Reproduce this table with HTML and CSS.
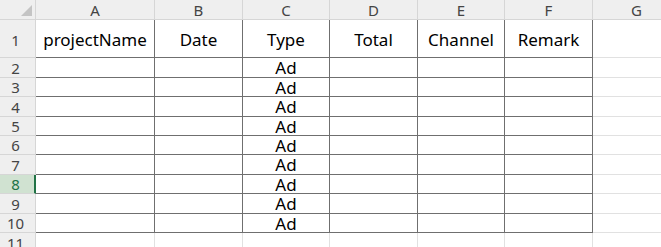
FILE: index.html
```html
<!DOCTYPE html>
<html lang="en">
<head>
<meta charset="utf-8">
<title>Sheet1</title>
<link rel="stylesheet" href="styles.css">
</head>
<body>
<div class="sheet">
  <div class="corner"><span class="corner-mark"></span></div>
  <div class="colhead">A</div>
  <div class="colhead">B</div>
  <div class="colhead">C</div>
  <div class="colhead">D</div>
  <div class="colhead">E</div>
  <div class="colhead">F</div>
  <div class="colhead">G</div>

  <div class="rowhead r1">1</div>
  <div class="cell r1 tb">projectName</div>
  <div class="cell r1 tb">Date</div>
  <div class="cell r1 tb">Type</div>
  <div class="cell r1 tb">Total</div>
  <div class="cell r1 tb">Channel</div>
  <div class="cell r1 tb">Remark</div>
  <div class="cell r1"></div>

  <div class="rowhead">2</div>
  <div class="cell tb"></div><div class="cell tb"></div><div class="cell tb">Ad</div><div class="cell tb"></div><div class="cell tb"></div><div class="cell tb"></div><div class="cell"></div>
  <div class="rowhead">3</div>
  <div class="cell tb"></div><div class="cell tb"></div><div class="cell tb">Ad</div><div class="cell tb"></div><div class="cell tb"></div><div class="cell tb"></div><div class="cell"></div>
  <div class="rowhead">4</div>
  <div class="cell tb"></div><div class="cell tb"></div><div class="cell tb">Ad</div><div class="cell tb"></div><div class="cell tb"></div><div class="cell tb"></div><div class="cell"></div>
  <div class="rowhead">5</div>
  <div class="cell tb"></div><div class="cell tb"></div><div class="cell tb">Ad</div><div class="cell tb"></div><div class="cell tb"></div><div class="cell tb"></div><div class="cell"></div>
  <div class="rowhead">6</div>
  <div class="cell tb"></div><div class="cell tb"></div><div class="cell tb">Ad</div><div class="cell tb"></div><div class="cell tb"></div><div class="cell tb"></div><div class="cell"></div>
  <div class="rowhead">7</div>
  <div class="cell tb"></div><div class="cell tb"></div><div class="cell tb">Ad</div><div class="cell tb"></div><div class="cell tb"></div><div class="cell tb"></div><div class="cell"></div>
  <div class="rowhead active">8</div>
  <div class="cell tb"></div><div class="cell tb"></div><div class="cell tb">Ad</div><div class="cell tb"></div><div class="cell tb"></div><div class="cell tb"></div><div class="cell"></div>
  <div class="rowhead">9</div>
  <div class="cell tb"></div><div class="cell tb"></div><div class="cell tb">Ad</div><div class="cell tb"></div><div class="cell tb"></div><div class="cell tb"></div><div class="cell"></div>
  <div class="rowhead">10</div>
  <div class="cell tb"></div><div class="cell tb"></div><div class="cell tb">Ad</div><div class="cell tb"></div><div class="cell tb"></div><div class="cell tb"></div><div class="cell"></div>
  <div class="rowhead">11</div>
  <div class="cell"></div><div class="cell"></div><div class="cell"></div><div class="cell"></div><div class="cell"></div><div class="cell"></div><div class="cell"></div>
</div>
</body>
</html>
```

FILE: styles.css
```css
html, body {
  margin: 0;
  padding: 0;
  background: #ffffff;
  overflow: hidden;
}

.sheet {
  display: grid;
  grid-template-columns: 36px 119px 88px 87px 88px 87px 88px 88px;
  grid-template-rows: 20px 38px 20px 19px 20px 19px 19px 20px 19px 20px 19px 20px;
  font-family: "Noto Sans", "DejaVu Sans", sans-serif;
  width: 681px;
}

.corner,
.colhead,
.rowhead {
  background: #efefef;
  color: #444444;
  font-size: 15px;
  box-sizing: border-box;
  border-right: 1px solid #d6d6d6;
  border-bottom: 1px solid #d6d6d6;
  display: flex;
  align-items: center;
  justify-content: center;
}

.corner {
  position: relative;
}

.corner-mark {
  position: absolute;
  right: 3px;
  bottom: 3px;
  width: 0;
  height: 0;
  border-left: 11px solid transparent;
  border-bottom: 11px solid #c4c4c4;
}

.colhead {
  padding-top: 1px;
}

.rowhead {
  padding-right: 4px;
}

.rowhead.r1 {
  padding-top: 2px;
}

.rowhead.active {
  background: #d0e2d1;
  color: #217346;
  border-right: 2px solid #217346;
  padding-right: 3px;
}

.cell {
  box-sizing: border-box;
  border-right: 1px solid #e1e1e1;
  border-bottom: 1px solid #e1e1e1;
  font-size: 17px;
  color: #000000;
  display: flex;
  align-items: center;
  justify-content: center;
  white-space: nowrap;
  line-height: 1;
}

.cell.tb {
  border-right-color: #6f6f6f;
  border-bottom-color: #6f6f6f;
}

.cell.r1 {
  padding-top: 2px;
}
```
